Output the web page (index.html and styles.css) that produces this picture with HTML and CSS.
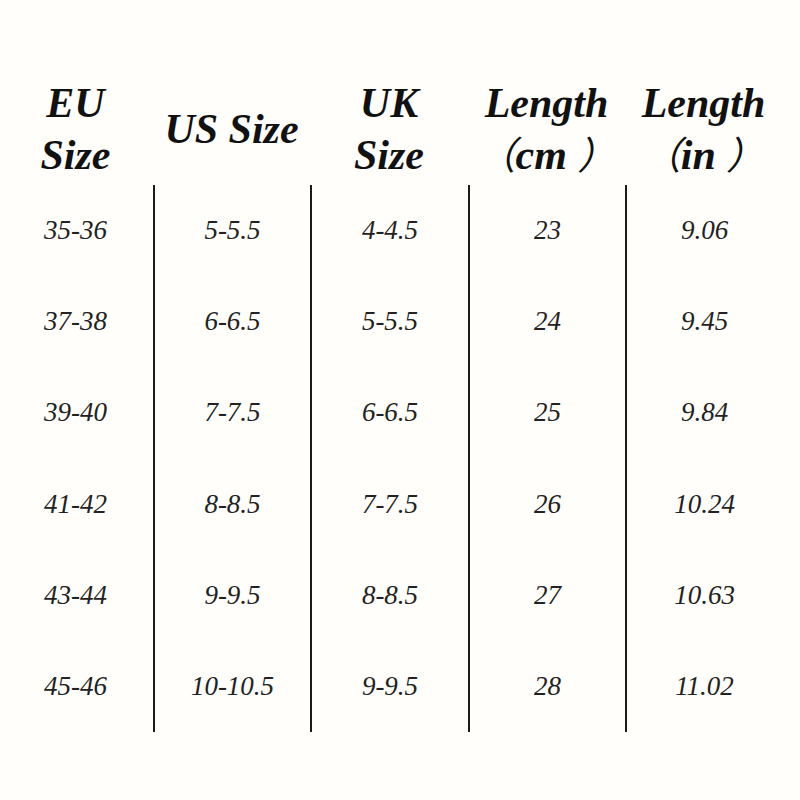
FILE: index.html
```html
<!DOCTYPE html>
<html lang="en">
<head>
    <meta charset="UTF-8">
    <meta name="viewport" content="width=device-width, initial-scale=1.0">
    <title>Size Chart</title>
    <link rel="stylesheet" href="styles.css">
</head>
<body>

<!-- Size chart -->
<div class="chart">
    <div class="chart-head">
        <div class="head-cell">EU<br>Size</div>
        <div class="head-cell">US Size</div>
        <div class="head-cell">UK<br>Size</div>
        <div class="head-cell">Length<br><span class="paren">（</span>cm <span class="paren">）</span></div>
        <div class="head-cell">Length<br><span class="paren">（</span>in <span class="paren">）</span></div>
    </div>

    <div class="chart-body">
        <div class="col">
            <span>35-36</span><span>37-38</span><span>39-40</span>
            <span>41-42</span><span>43-44</span><span>45-46</span>
        </div>
        <div class="col lined">
            <span>5-5.5</span><span>6-6.5</span><span>7-7.5</span>
            <span>8-8.5</span><span>9-9.5</span><span>10-10.5</span>
        </div>
        <div class="col lined">
            <span>4-4.5</span><span>5-5.5</span><span>6-6.5</span>
            <span>7-7.5</span><span>8-8.5</span><span>9-9.5</span>
        </div>
        <div class="col lined">
            <span>23</span><span>24</span><span>25</span>
            <span>26</span><span>27</span><span>28</span>
        </div>
        <div class="col lined">
            <span>9.06</span><span>9.45</span><span>9.84</span>
            <span>10.24</span><span>10.63</span><span>11.02</span>
        </div>
    </div>
</div>

</body>
</html>
```

FILE: styles.css
```css
* {
    margin: 0;
    padding: 0;
    box-sizing: border-box;
}

body {
    background: #fffefb;
    color: #1a1a1a;
    font-family: "Liberation Serif", "Noto Sans CJK SC", serif;
    width: 800px;
    height: 800px;
    overflow: hidden;
}

.chart {
    margin-left: -2px;
}

/* header */
.chart-head {
    display: grid;
    grid-template-columns: 155px 157px 158px 157px 157px;
    height: 185px;
    padding-top: 77px;
}

.head-cell {
    text-align: center;
    font-size: 42px;
    font-weight: bold;
    font-style: italic;
    line-height: 52px;
    color: #111;
}

.head-cell:nth-child(2) {
    padding-top: 26px;
}

.paren {
    font-weight: normal;
    font-size: 38px;
}

/* body */
.chart-body {
    display: grid;
    grid-template-columns: 155px 157px 158px 157px 157px;
    height: 547px;
}

.col {
    display: grid;
    grid-template-rows: repeat(6, 1fr);
    align-items: center;
    text-align: center;
    font-size: 27px;
    font-style: italic;
    color: #222;
}

.lined {
    border-left: 2px solid #1a1a1a;
}
```
